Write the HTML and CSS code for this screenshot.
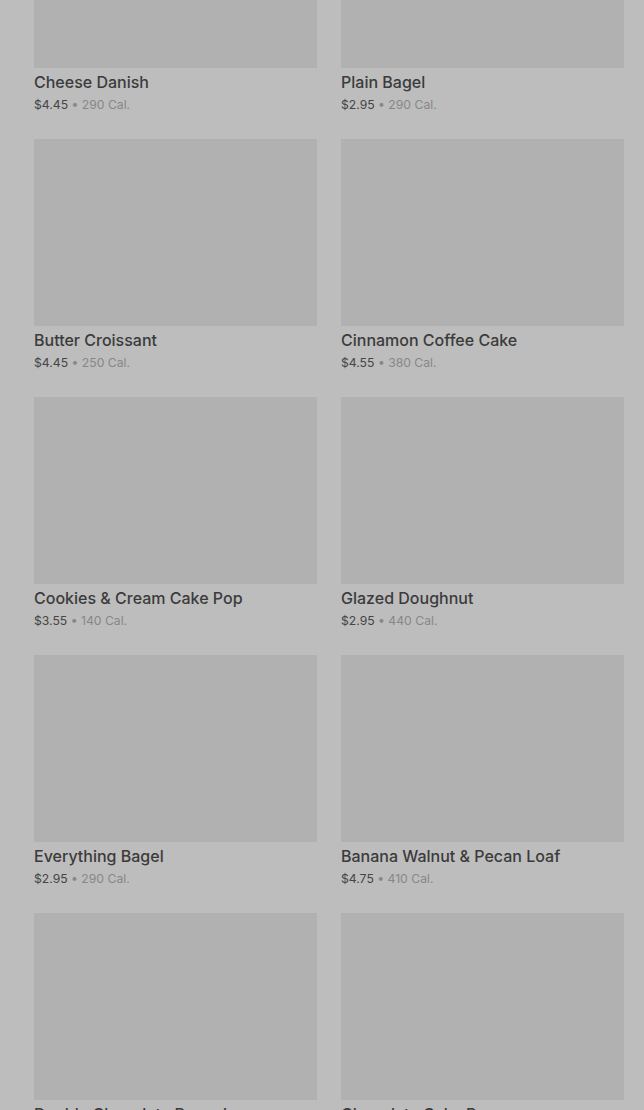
FILE: index.html
```html
<!DOCTYPE html>
<html lang="en">
<head>
  <meta charset="UTF-8" />
  <meta name="viewport" content="width=device-width, initial-scale=1.0"/>
  <title>Bakery</title>
  <link rel="stylesheet" href="styles.css">
</head>
<body>

  <div class="menu-grid">
    <div class="item">
      <div class="thumb"></div>
      <h3>Cheese Danish</h3>
      <p class="meta"><span class="price">$4.45</span> • 290 Cal.</p>
    </div>
    <div class="item">
      <div class="thumb"></div>
      <h3>Plain Bagel</h3>
      <p class="meta"><span class="price">$2.95</span> • 290 Cal.</p>
    </div>
    <div class="item">
      <div class="thumb"></div>
      <h3>Butter Croissant</h3>
      <p class="meta"><span class="price">$4.45</span> • 250 Cal.</p>
    </div>
    <div class="item">
      <div class="thumb"></div>
      <h3>Cinnamon Coffee Cake</h3>
      <p class="meta"><span class="price">$4.55</span> • 380 Cal.</p>
    </div>
    <div class="item">
      <div class="thumb"></div>
      <h3>Cookies &amp; Cream Cake Pop</h3>
      <p class="meta"><span class="price">$3.55</span> • 140 Cal.</p>
    </div>
    <div class="item">
      <div class="thumb"></div>
      <h3>Glazed Doughnut</h3>
      <p class="meta"><span class="price">$2.95</span> • 440 Cal.</p>
    </div>
    <div class="item">
      <div class="thumb"></div>
      <h3>Everything Bagel</h3>
      <p class="meta"><span class="price">$2.95</span> • 290 Cal.</p>
    </div>
    <div class="item">
      <div class="thumb"></div>
      <h3>Banana Walnut &amp; Pecan Loaf</h3>
      <p class="meta"><span class="price">$4.75</span> • 410 Cal.</p>
    </div>
    <div class="item">
      <div class="thumb"></div>
      <h3>Double Chocolate Brownie</h3>
      <p class="meta"><span class="price">$3.95</span> • 480 Cal.</p>
    </div>
    <div class="item">
      <div class="thumb"></div>
      <h3>Chocolate Cake Pop</h3>
      <p class="meta"><span class="price">$3.55</span> • 160 Cal.</p>
    </div>
  </div>

</body>
</html>
```

FILE: styles.css
```css
body {
  font-family: Inter, Roboto, "Liberation Sans", sans-serif;
  background-color: #bdbdbd;
  color: #3a3a3a;
  margin: 0;
  height: 1110px;
  overflow: hidden;
}
.menu-grid {
  display: grid;
  grid-template-columns: 283px 283px;
  column-gap: 24px;
  row-gap: 25px;
  padding: 0 20px 0 34px;
  margin-top: -119px;
}
.thumb {
  height: 187px;
  background-color: #b1b1b1;
}
.item h3 {
  margin: 4px 0 0;
  font-size: 16px;
  line-height: 20px;
  font-weight: 500;
  color: #3b3b3b;
}
.meta {
  margin: 4px 0 0;
  font-size: 12.2px;
  line-height: 18px;
  color: #878787;
}
.price {
  color: #454545;
}
```
